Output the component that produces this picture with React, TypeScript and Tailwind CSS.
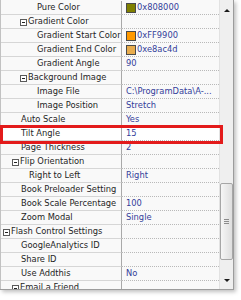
import React from "react";

type Row = {
  name: string;
  kind: "leaf" | "cat";
  level: number;
  value?: string;
  swatch?: string;
  active?: boolean;
};

const ROWS: Row[] = [
  { name: "Pure Color", kind: "leaf", level: 3, value: "0x808000", swatch: "bg-[#808000]" },
  { name: "Gradient Color", kind: "cat", level: 2 },
  { name: "Gradient Start Color", kind: "leaf", level: 3, value: "0xFF9900", swatch: "bg-[#ff9900]" },
  { name: "Gradient End Color", kind: "leaf", level: 3, value: "0xe8ac4d", swatch: "bg-[#e8ac4d]" },
  { name: "Gradient Angle", kind: "leaf", level: 3, value: "90" },
  { name: "Background Image", kind: "cat", level: 2 },
  { name: "Image File", kind: "leaf", level: 3, value: "C:\\ProgramData\\A-..." },
  { name: "Image Position", kind: "leaf", level: 3, value: "Stretch" },
  { name: "Auto Scale", kind: "leaf", level: 1, value: "Yes" },
  { name: "Tilt Angle", kind: "leaf", level: 1, value: "15", active: true },
  { name: "Page Thickness", kind: "leaf", level: 1, value: "2" },
  { name: "Flip Orientation", kind: "cat", level: 1 },
  { name: "Right to Left", kind: "leaf", level: 2, value: "Right" },
  { name: "Book Preloader Setting", kind: "leaf", level: 1 },
  { name: "Book Scale Percentage", kind: "leaf", level: 1, value: "100" },
  { name: "Zoom Modal", kind: "leaf", level: 1, value: "Single" },
  { name: "Flash Control Settings", kind: "cat", level: 0 },
  { name: "GoogleAnalytics ID", kind: "leaf", level: 1 },
  { name: "Share ID", kind: "leaf", level: 1 },
  { name: "Use Addthis", kind: "leaf", level: 1, value: "No" },
  { name: "Email a Friend", kind: "cat", level: 1 },
];

const LEAF_PAD: Record<number, string> = {
  1: "pl-[20px]",
  2: "pl-[28px]",
  3: "pl-[36px]",
};

const CAT_PAD: Record<number, string> = {
  0: "pl-[2px]",
  1: "pl-[11px]",
  2: "pl-[19px]",
};

function Collapse() {
  return (
    <span className="mb-[2px] mr-[1px] flex h-[7px] w-[7px] shrink-0 items-center justify-center border border-[#5a5a5a] bg-white">
      <span className="h-px w-[3px] bg-[#222]" />
    </span>
  );
}

function PropRow({ row }: { row: Row }) {
  const bg = row.active ? "bg-white" : "bg-[#f9f9f9]";
  return (
    <div className={`flex h-[14px] shrink-0 ${bg}`}>
      <div
        className={`flex w-[121px] shrink-0 items-end overflow-hidden whitespace-nowrap border-r border-b border-r-[#a9a9a9] border-b-[#d6d6d6] text-[#1f1f1f] ${
          row.kind === "cat" ? CAT_PAD[row.level] : LEAF_PAD[row.level]
        }`}
      >
        {row.kind === "cat" && <Collapse />}
        <span>{row.name}</span>
      </div>
      <div className="flex flex-1 items-end overflow-hidden whitespace-nowrap border-b border-dotted border-[#b9b9b9] pl-[4px] text-[#34409a]">
        {row.swatch && (
          <span className={`mb-[1px] mr-[1px] h-[10px] w-[10px] shrink-0 border border-[#4a4a4a] ${row.swatch}`} />
        )}
        {row.value && <span>{row.value}</span>}
      </div>
    </div>
  );
}

function ScrollBar() {
  return (
    <div className="flex w-[14px] shrink-0 flex-col border-l border-[#e2e2e2] bg-[#efefef]">
      <div className="flex h-[17px] shrink-0 justify-center pt-[9px]">
        <span className="h-0 w-0 border-x-[3px] border-b-[3px] border-x-transparent border-b-[#1a1a1a]" />
      </div>
      <div className="h-[166px] shrink-0" />
      <div className="flex h-[77px] w-[13px] shrink-0 flex-col items-center justify-center gap-[1px] rounded-[2px] border border-[#a6a6a6] bg-gradient-to-r from-[#f6f6f6] to-[#dedede]">
        <span className="h-px w-[5px] bg-[#8c8c8c]" />
        <span className="h-px w-[5px] bg-[#8c8c8c]" />
        <span className="h-px w-[5px] bg-[#8c8c8c]" />
      </div>
      <div className="flex-1" />
      <div className="flex h-[10px] shrink-0 justify-center">
        <span className="h-0 w-0 border-x-[3px] border-t-[3px] border-x-transparent border-t-[#1a1a1a]" />
      </div>
    </div>
  );
}

export default function App() {
  return (
    <div
      className="h-[300px] w-[241px] overflow-hidden bg-white text-[9.25px] leading-normal"
      style={{ fontFamily: "'DejaVu Sans Condensed', 'DejaVu Sans', sans-serif", fontStretch: "condensed" }}
    >
      <div className="relative flex h-[290px] w-[234px] overflow-hidden border-r border-b border-[#9c9c9c] shadow-[2px_2px_4px_rgba(0,0,0,0.25)]">
        <div className="flex w-[219px] shrink-0 flex-col border-l border-[#c2c2c2] bg-[#f9f9f9] pt-px">
          {ROWS.map((row) => (
            <PropRow key={row.name} row={row} />
          ))}
        </div>
        <ScrollBar />
        <div className="absolute left-0 top-[125px] h-[19px] w-[223px] border-[3px] border-[#e31b1b]" />
      </div>
    </div>
  );
}
